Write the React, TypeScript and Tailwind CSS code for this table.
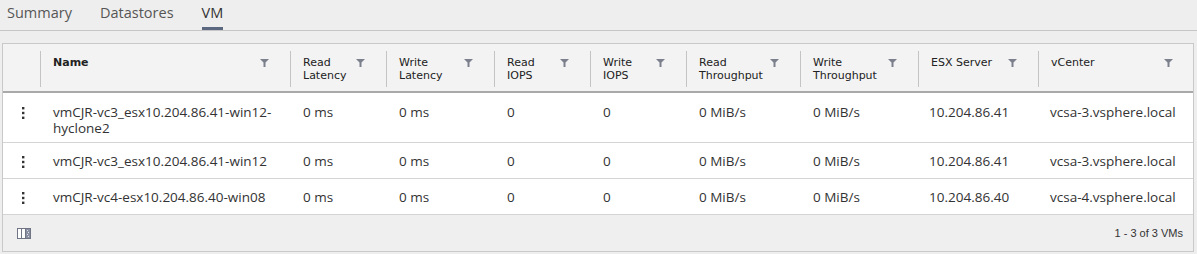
import React from 'react';

type Vm = {
  name: string[];
  esx: string;
  vc: string;
};

const vms: Vm[] = [
  { name: ['vmCJR-vc3_esx10.204.86.41-win12-', 'hyclone2'], esx: '10.204.86.41', vc: 'vcsa-3.vsphere.local' },
  { name: ['vmCJR-vc3_esx10.204.86.41-win12'], esx: '10.204.86.41', vc: 'vcsa-3.vsphere.local' },
  { name: ['vmCJR-vc4-esx10.204.86.40-win08'], esx: '10.204.86.40', vc: 'vcsa-4.vsphere.local' },
];

const columns: string[][] = [
  ['Name'],
  ['Read', 'Latency'],
  ['Write', 'Latency'],
  ['Read', 'IOPS'],
  ['Write', 'IOPS'],
  ['Read', 'Throughput'],
  ['Write', 'Throughput'],
  ['ESX Server'],
  ['vCenter'],
];

const grid = 'grid grid-cols-[37px_250px_96px_108px_96px_96px_114px_118px_120px_1fr]';

function Funnel() {
  return (
    <svg width="9" height="8" viewBox="0 0 9 8" className="shrink-0 mt-[3px]">
      <path d="M0 0 H9 L5.5 3.5 V8 H3.5 V3.5 Z" fill="#7b808c" />
    </svg>
  );
}

function Dots() {
  return (
    <svg width="4" height="12" viewBox="0 0 4 12">
      <rect x="1" y="0" width="2.4" height="2.4" fill="#333" />
      <rect x="1" y="4.8" width="2.4" height="2.4" fill="#333" />
      <rect x="1" y="9.6" width="2.4" height="2.4" fill="#333" />
    </svg>
  );
}

function ColumnToggle() {
  return (
    <svg width="14" height="11" viewBox="0 0 14 11">
      <rect x="0.5" y="0.5" width="13" height="10" fill="#fff" stroke="#6f7585" />
      <line x1="4.5" y1="0.5" x2="4.5" y2="10.5" stroke="#6f7585" />
      <line x1="8.5" y1="0.5" x2="8.5" y2="10.5" stroke="#6f7585" />
      <rect x="9" y="1" width="4" height="9" fill="#8a90a2" />
      <rect x="10" y="2" width="1" height="1" fill="#dfe2ea" />
      <rect x="11" y="4" width="1" height="1" fill="#dfe2ea" />
      <rect x="10" y="6" width="1" height="1" fill="#dfe2ea" />
      <rect x="11" y="8" width="1" height="1" fill="#dfe2ea" />
    </svg>
  );
}

export default function App() {
  return (
    <div className="w-[1197px] h-[254px] bg-[#eeeeee] overflow-hidden" style={{ fontFamily: '"Open Sans", sans-serif' }}>
      {/* Tabs */}
      <div className="flex items-end h-[31px] border-b border-[#c6c6c6] pl-[7px] gap-[28px] text-[14.5px] text-[#565656]">
        <div className="h-[30px] leading-[26px]">Summary</div>
        <div className="h-[30px] leading-[26px]">Datastores</div>
        <div className="h-[30px] leading-[26px] border-b-[3px] border-[#5c6780] text-[#333]">VM</div>
      </div>

      {/* Grid */}
      <div className="mt-[12px] ml-[2px] mr-[3px] border border-[#c9c9c9] bg-white">
        <div className={`${grid} h-[49px] bg-[#f3f3f3] border-b-2 border-[#a9a9a9] text-[11px] leading-[13px] text-[#222]`} style={{ fontFamily: '"DejaVu Sans", sans-serif' }}>
          <div />
          {columns.map((c, i) => (
            <div key={i} className="flex">
              <div className="w-px bg-[#c4c4c4] mt-[7px] mb-[4px]" />
              <div className={`flex flex-1 justify-between pl-[12px] ${i === 8 ? 'pr-[20px]' : 'pr-[21px]'} pt-[12px]`}>
                <div className={i === 0 ? 'font-bold' : ''}>
                  {c.map((l) => (
                    <div key={l}>{l}</div>
                  ))}
                </div>
                <Funnel />
              </div>
            </div>
          ))}
        </div>

        {vms.map((vm, r) => (
          <div
            key={r}
            className={`${grid} border-b border-[#d4d4d4] text-[13.5px] leading-[16px] text-[#333] ${r === 0 ? 'h-[50px] pt-[11px]' : 'h-[36px] pt-[10px]'}`}
          >
            <div className="flex justify-center pl-[2px] pt-[3px]">
              <Dots />
            </div>
            <div className="pl-[13px]">
              {vm.name.map((n) => (
                <div key={n}>{n}</div>
              ))}
            </div>
            <div className="pl-[13px]">0 ms</div>
            <div className="pl-[13px]">0 ms</div>
            <div className="pl-[13px]">0</div>
            <div className="pl-[13px]">0</div>
            <div className="pl-[13px]">0 MiB/s</div>
            <div className="pl-[13px]">0 MiB/s</div>
            <div className="pl-[11px]">{vm.esx}</div>
            <div className="pl-[12px]">{vm.vc}</div>
          </div>
        ))}

        {/* Footer */}
        <div className="flex items-center justify-between h-[36px] bg-[#efefef] pl-[14px] pr-[10px] text-[11px] text-[#333]" style={{ fontFamily: '"Liberation Sans", sans-serif' }}>
          <ColumnToggle />
          <span>1 - 3 of 3 VMs</span>
        </div>
      </div>
    </div>
  );
}
